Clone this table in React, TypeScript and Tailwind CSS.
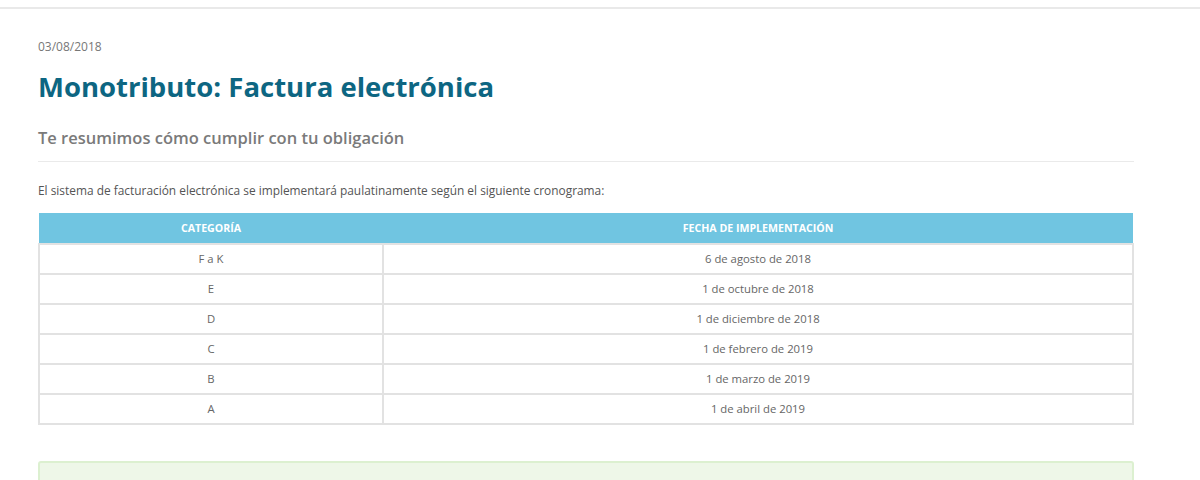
const rows = [
  { cat: "F a K", date: "6 de agosto de 2018" },
  { cat: "E", date: "1 de octubre de 2018" },
  { cat: "D", date: "1 de diciembre de 2018" },
  { cat: "C", date: "1 de febrero de 2019" },
  { cat: "B", date: "1 de marzo de 2019" },
  { cat: "A", date: "1 de abril de 2019" },
];

export default function App() {
  return (
    <div className="w-[1200px] h-[480px] overflow-hidden bg-white font-['Open_Sans',sans-serif]">
      <div className="h-[7px]" />
      <div className="h-[2px] bg-[#e9e9e9]" />
      <div className="ml-[38px] w-[1096px]">
        <div className="mt-[30px] text-[12px] leading-4 text-[#777]">03/08/2018</div>
        <h1 className="mt-[14px] text-[27.5px] leading-9 font-bold text-[#0d6682]">
          Monotributo: Factura electrónica
        </h1>
        <h2 className="mt-[21px] text-[16.5px] leading-6 font-semibold text-[#7a7a7a]">
          Te resumimos cómo cumplir con tu obligación
        </h2>
        <div className="mt-[11px] h-px bg-[#eaeaea]" />
        <p className="mt-[20px] text-[11.9px] leading-4 text-[#555]">
          El sistema de facturación electrónica se implementará paulatinamente según el siguiente cronograma:
        </p>
        <table className="mt-[15px] w-full border-collapse">
          <thead>
            <tr className="bg-[#70c5e1] h-[31px]">
              <th className="w-[344px] pt-px text-center text-[10.6px] font-bold text-white">CATEGORÍA</th>
              <th className="pt-px text-center text-[10.6px] font-bold text-white">FECHA DE IMPLEMENTACIÓN</th>
            </tr>
          </thead>
          <tbody>
            {rows.map((r, i) => (
              <tr key={i} className="h-[30px]">
                <td className="border-2 border-[#e2e2e2] pt-px text-center text-[11.3px] text-[#666]">{r.cat}</td>
                <td className="border-2 border-[#e2e2e2] pt-px text-center text-[11.3px] text-[#666]">{r.date}</td>
              </tr>
            ))}
          </tbody>
        </table>
        <div className="mt-[36px] h-[40px] rounded-[3px] border-2 border-[#dcf0d0] bg-[#eef7e8]" />
      </div>
    </div>
  );
}
